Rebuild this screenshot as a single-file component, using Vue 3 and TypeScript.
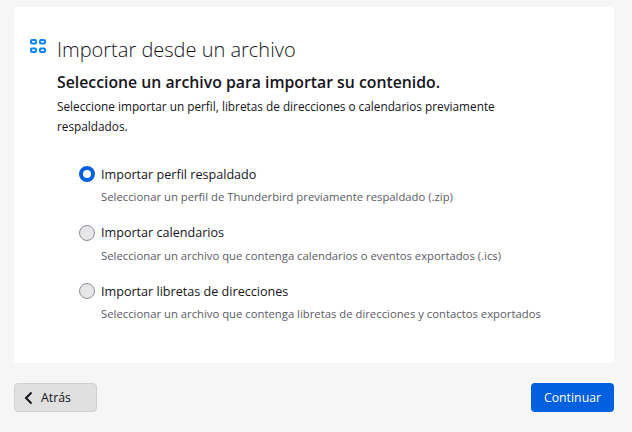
<script setup lang="ts">
const options = [
  { label: 'Importar perfil respaldado', hint: 'Seleccionar un perfil de Thunderbird previamente respaldado (.zip)', checked: true },
  { label: 'Importar calendarios', hint: 'Seleccionar un archivo que contenga calendarios o eventos exportados (.ics)', checked: false },
  { label: 'Importar libretas de direcciones', hint: 'Seleccionar un archivo que contenga libretas de direcciones y contactos exportados', checked: false },
]
</script>

<template>
  <div class="page">
    <section class="card">
      <div class="head">
        <svg class="head-icon" width="16" height="14" viewBox="0 0 16 14" fill="none" stroke="#0a84ff" stroke-width="2">
          <rect x="1" y="1" width="5" height="3.5" rx="1" />
          <rect x="10" y="1" width="5" height="3.5" rx="1" />
          <rect x="1" y="9.5" width="5" height="3.5" rx="1" />
          <rect x="10" y="9.5" width="5" height="3.5" rx="1" />
        </svg>
        <h1>Importar desde un archivo</h1>
      </div>
      <div class="body">
        <h2>Seleccione un archivo para importar su contenido.</h2>
        <p class="intro">Seleccione importar un perfil, libretas de direcciones o calendarios previamente respaldados.</p>
        <div class="options">
          <div v-for="opt in options" :key="opt.label" class="option">
            <div class="radio-row">
              <span class="radio" :class="{ checked: opt.checked }"></span>
              <span class="label">{{ opt.label }}</span>
            </div>
            <div class="hint">{{ opt.hint }}</div>
          </div>
        </div>
      </div>
    </section>
    <footer class="actions">
      <button class="btn back">
        <svg width="9" height="14" viewBox="0 0 9 14" fill="none" stroke="#15141a" stroke-width="2">
          <path d="M7.5 1.5 2 7l5.5 5.5" />
        </svg>
        Atrás
      </button>
      <button class="btn primary">Continuar</button>
    </footer>
  </div>
</template>

<style>
html,
body {
  margin: 0;
  background: #f6f6f6;
}
</style>

<style scoped>
.page {
  width: 632px;
  height: 432px;
  box-sizing: border-box;
  padding: 7px 18px 0 14px;
  font-family: 'Open Sans', 'Noto Sans', sans-serif;
  color: #15141a;
}

.card {
  height: 356px;
  box-sizing: border-box;
  padding: 29px 16px 0;
  background: #fff;
  border-radius: 4px;
}

.head {
  display: flex;
  align-items: center;
  gap: 11px;
  height: 26px;
}

.head-icon {
  flex: none;
  margin-bottom: 6px;
}

h1 {
  margin: 0;
  padding-top: 2px;
  font-size: 20px;
  font-weight: 300;
  line-height: 26px;
}

.body {
  padding-left: 27px;
}

h2 {
  margin: 9px 0 0;
  font-size: 15.8px;
  font-weight: 600;
  line-height: 22px;
}

.intro {
  margin: 4px 0 0;
  max-width: 460px;
  font-size: 11.8px;
  line-height: 19.5px;
}

.options {
  margin-top: 28px;
  padding-left: 22px;
  display: flex;
  flex-direction: column;
  gap: 18.5px;
}

.radio-row {
  display: flex;
  align-items: center;
  gap: 6px;
  height: 20px;
}

.radio {
  width: 16px;
  height: 16px;
  box-sizing: border-box;
  border: 1px solid #8f8f9d;
  border-radius: 50%;
  background: #e6e6e6;
}

.radio.checked {
  border: 4px solid #0060df;
  background: #fff;
}

.label {
  font-size: 12.6px;
}

.hint {
  margin-top: 5px;
  padding-left: 22px;
  font-size: 11.3px;
  line-height: 15px;
  color: #5b5b66;
}

.actions {
  margin-top: 20px;
  display: flex;
  justify-content: space-between;
}

.btn {
  width: 83px;
  height: 29px;
  box-sizing: border-box;
  border-radius: 4px;
  font-family: inherit;
  font-size: 12.3px;
}

.back {
  display: flex;
  align-items: center;
  gap: 8px;
  padding: 0 0 0 9px;
  border: 1px solid #cfcfd8;
  background: #e0e0e0;
  color: #15141a;
}

.primary {
  padding: 0;
  border: none;
  background: #0060df;
  color: #fff;
}
</style>
